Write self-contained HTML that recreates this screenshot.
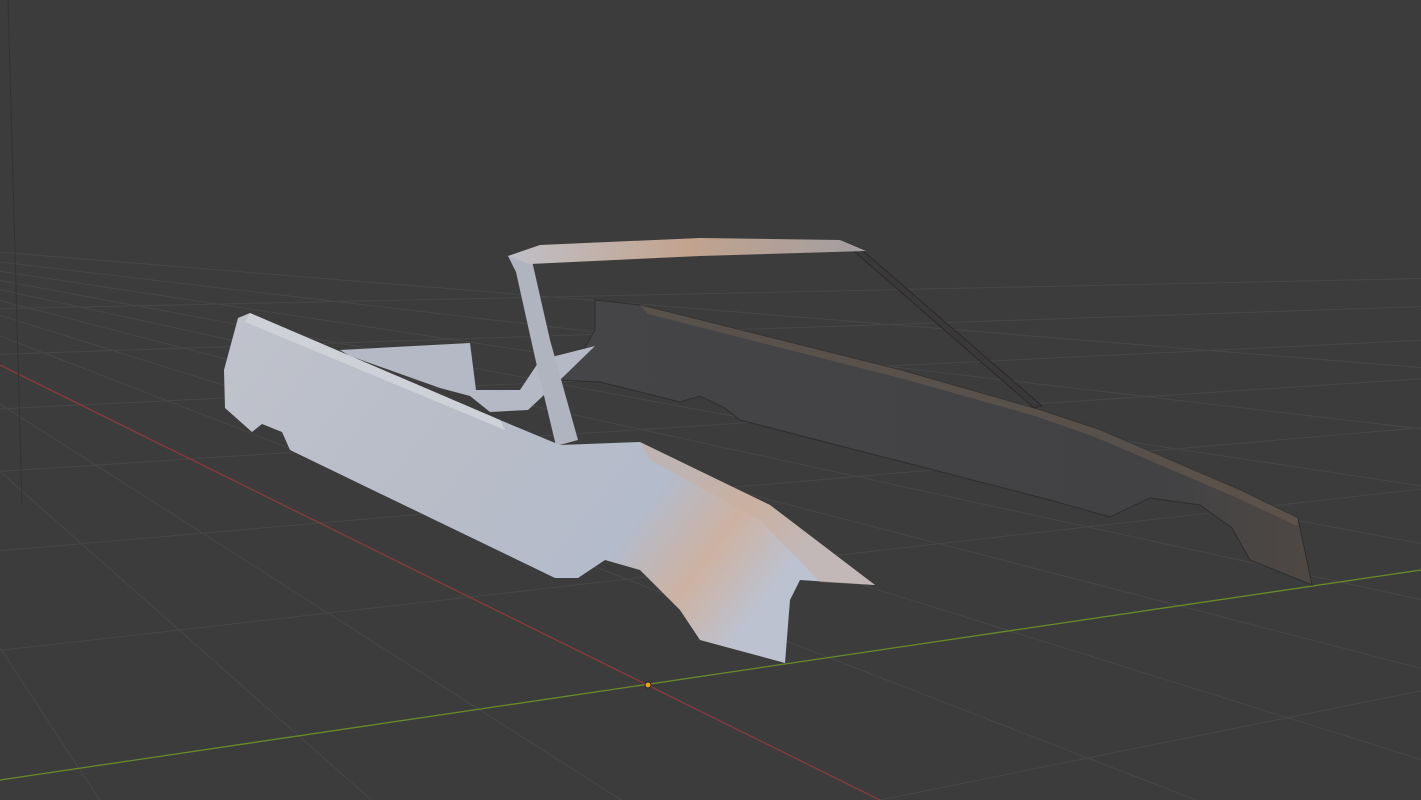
<!DOCTYPE html>
<html><head><meta charset="utf-8"><style>
html,body{margin:0;padding:0;background:#3d3d3d;overflow:hidden;width:1421px;height:800px}
svg{display:block;overflow:hidden}
</style></head><body>
<svg width="1421" height="800" viewBox="0 0 1421 800" xmlns="http://www.w3.org/2000/svg">
<defs>
<linearGradient id="body" x1="0" y1="0" x2="1" y2="0.4">
<stop offset="0" stop-color="#c0c3cc"/><stop offset="0.4" stop-color="#b9bdc8"/><stop offset="0.75" stop-color="#b4bbca"/><stop offset="0.88" stop-color="#cdb2a2"/><stop offset="1" stop-color="#bcc2d0"/></linearGradient>
<linearGradient id="side" x1="0" y1="0" x2="1" y2="0">
<stop offset="0" stop-color="#454547"/><stop offset="0.3" stop-color="#444446"/><stop offset="0.8" stop-color="#424244"/><stop offset="1" stop-color="#4e4844"/></linearGradient>
<linearGradient id="top" x1="0" y1="0" x2="1" y2="0">
<stop offset="0" stop-color="#c0c0c7"/><stop offset="0.5" stop-color="#c2a38e"/><stop offset="1" stop-color="#a29ea2"/></linearGradient>
</defs>
<rect width="1421" height="800" fill="#3c3c3c"/>
<g stroke="#474747" stroke-width="1">
<line x1="-273" y1="230" x2="-781" y2="2674"/>
<line x1="-273" y1="230" x2="219" y2="2526"/>
<line x1="-273" y1="230" x2="1139" y2="2390"/>
<line x1="-273" y1="230" x2="2019" y2="2258"/>
<line x1="-273" y1="230" x2="2739" y2="2150"/>
<line x1="-273" y1="230" x2="4139" y2="1942"/>
<line x1="-273" y1="230" x2="4859" y2="1834"/>
<line x1="-273" y1="230" x2="5539" y2="1734"/>
<line x1="-273" y1="230" x2="6179" y2="1638"/>
<line x1="-273" y1="230" x2="6819" y2="1542"/>
<line x1="-273" y1="230" x2="7619" y2="1422"/>
<line x1="-273" y1="230" x2="8619" y2="1274"/>
<line x1="-273" y1="230" x2="10019" y2="1066"/>
<line x1="3702" y1="230" x2="-6506" y2="3042"/>
<line x1="3702" y1="230" x2="-7586" y2="2510"/>
<line x1="3702" y1="230" x2="-9226" y2="1698"/>
<line x1="3702" y1="230" x2="-9826" y2="1402"/>
<line x1="3702" y1="230" x2="-10346" y2="1146"/>
<line x1="3702" y1="230" x2="-10786" y2="930"/>
<line x1="3702" y1="230" x2="-11186" y2="730"/>
<line x1="3702" y1="230" x2="-11546" y2="554"/>
</g>
<line x1="0" y1="365" x2="880" y2="800" stroke="#8a3a3f" stroke-width="1.3"/>
<line x1="0" y1="780" x2="1421" y2="570" stroke="#6a8a2a" stroke-width="1.3"/>
<line x1="8" y1="0" x2="22" y2="505" stroke="#333" stroke-width="1"/>
<path d="M595,300 L640,305 L900,370 L1040,410 L1100,430 L1240,490 L1298,518 L1312,585 L1250,560 L1232,528 L1200,505 L1150,498 L1110,517 L1050,500 L740,420 L725,408 L700,396 L680,402 L600,382 L560,380 L580,356 L595,330 Z" fill="url(#side)" stroke="#2e2e2e" stroke-width="1"/>
<path d="M640,305 L900,370 L1040,410 L1100,430 L1240,490 L1298,518 L1297,526 L1235,497 L1095,437 L1035,416 L900,378 L648,314 Z" fill="#62574f" opacity="0.7"/>
<path d="M848,246 L862,250 L1042,406 L1034,408 Z" fill="#3a3838" stroke="#2a2a2a" stroke-width="1"/>
<path d="M340,350 L470,343 L476,390 L520,390 L540,360 L595,346 L560,380 L528,410 L490,412 L470,396 L440,388 L350,356 Z" fill="#b4b9c5"/>
<path d="M508,256 L530,252 L550,340 L578,440 L556,446 L536,362 L516,272 Z" fill="#b0b4bf"/>
<path d="M508,256 L540,245 L700,238 L840,240 L866,251 L700,256 L530,264 Z" fill="url(#top)"/>
<path d="M238,318 L250,313 L500,420 L560,445 L640,442 L770,505 L875,585 L800,580 L790,600 L785,663 L700,640 L680,610 L640,570 L605,560 L578,578 L555,578 L290,450 L282,432 L262,424 L252,432 L225,408 L224,370 Z" fill="url(#body)"/>
<path d="M250,313 L500,420 L505,430 L245,322 Z" fill="#cfd1d9"/>
<path d="M640,442 L770,505 L875,585 L820,582 L760,520 L650,460 Z" fill="#c8ae9e" opacity="0.5"/>
<circle cx="648" cy="685" r="3" fill="#f0a020" stroke="#222" stroke-width="1"/>
</svg>
</body></html>
